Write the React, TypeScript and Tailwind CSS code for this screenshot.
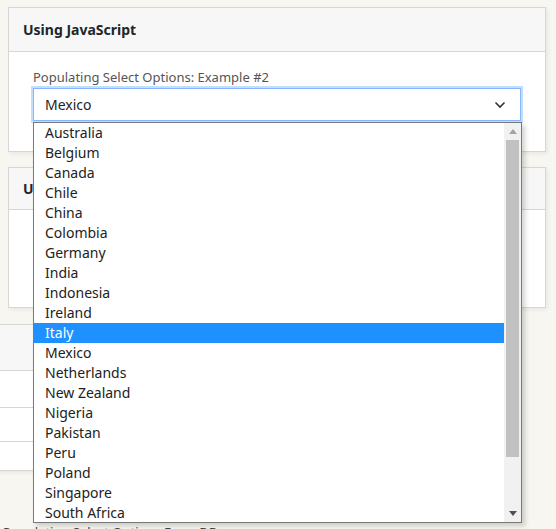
import React from 'react';

const countries = [
  'Australia', 'Belgium', 'Canada', 'Chile', 'China', 'Colombia', 'Germany', 'India', 'Indonesia', 'Ireland',
  'Italy', 'Mexico', 'Netherlands', 'New Zealand', 'Nigeria', 'Pakistan', 'Peru', 'Poland', 'Singapore', 'South Africa',
];

const font = { fontFamily: '"Segoe UI", "Noto Sans", "Open Sans", sans-serif' };

export default function App() {
  return (
    <div className="relative h-[529px] w-[556px] overflow-hidden bg-[#f8f6f0] text-[#212529]" style={font}>
      <div className="flex flex-col pl-[8px] pr-[10px] pt-[7px]">
        {/* card 1 */}
        <div className="h-[145px] border border-[#d6d6d6] bg-white shadow-[2px_2px_4px_rgba(0,0,0,0.06)]">
          <div className="flex h-[44px] items-center border-b border-[#d6d6d6] bg-[#f7f7f7] px-[14px] text-[14px] font-bold">
            Using JavaScript
          </div>
          <div className="px-[24px] pt-[16px]">
            <div className="text-[13px] leading-[18px] text-[#555]">Populating Select Options: Example #2</div>
            <div className="mt-[2px] flex h-[33px] w-[488px] items-center justify-between border border-[#86b7fe] pl-[11px] pr-[14px] text-[14px] ring-[2px] ring-[#c7ddfe]">
              <span>Mexico</span>
              <svg width="12" height="8" viewBox="0 0 12 8" fill="none" stroke="#333" strokeWidth="1.6">
                <path d="M1.5 1.5 6 6l4.5-4.5" />
              </svg>
            </div>
          </div>
        </div>

        {/* card 2 */}
        <div className="mt-[15px] h-[141px] border border-[#d6d6d6] bg-white shadow-[2px_2px_4px_rgba(0,0,0,0.06)]">
          <div className="flex h-[42px] items-center border-b border-[#d6d6d6] bg-[#f7f7f7] px-[14px] text-[14px] font-bold">
            Using jQuery
          </div>
        </div>

        {/* card 3 */}
        <div className="-ml-[12px] mt-[16px] flex h-[147px] w-[500px] flex-col border border-[#d6d6d6] bg-white shadow-[2px_2px_4px_rgba(0,0,0,0.06)]">
          <div className="h-[46px] border-b border-[#d6d6d6] bg-[#f7f7f7]" />
          <div className="h-[37px] border-b border-[#d6d6d6]" />
          <div className="h-[34px] border-b border-[#d6d6d6]" />
        </div>

        <div className="ml-[-5px] mt-[52px] text-[13px] leading-[18px] text-[#444]">Populating Select Options From DB</div>
      </div>

      {/* open dropdown list */}
      <div className="absolute left-[33px] top-[122px] flex h-[401px] w-[489px] border border-[#7a7a7a] bg-white shadow-[3px_3px_5px_rgba(0,0,0,0.18)]">
        <ul className="flex-1 text-[14px] leading-[20px] text-[#222]">
          {countries.map(c => (
            <li key={c} className={`h-[20px] pl-[11px] ${c === 'Italy' ? 'bg-[#1e90ff] text-white' : ''}`}>
              {c}
            </li>
          ))}
        </ul>
        <div className="flex w-[17px] flex-col items-center bg-[#f1f1f1]">
          <div className="flex h-[17px] items-center justify-center">
            <svg width="8" height="5" viewBox="0 0 8 5"><path d="M0 5 4 0l4 5z" fill="#a3a3a3" /></svg>
          </div>
          <div className="h-[317px] w-[13px] bg-[#c1c1c1]" />
          <div className="flex-1" />
          <div className="flex h-[17px] items-center justify-center">
            <svg width="8" height="5" viewBox="0 0 8 5"><path d="M0 0h8L4 5z" fill="#505050" /></svg>
          </div>
        </div>
      </div>
    </div>
  );
}
